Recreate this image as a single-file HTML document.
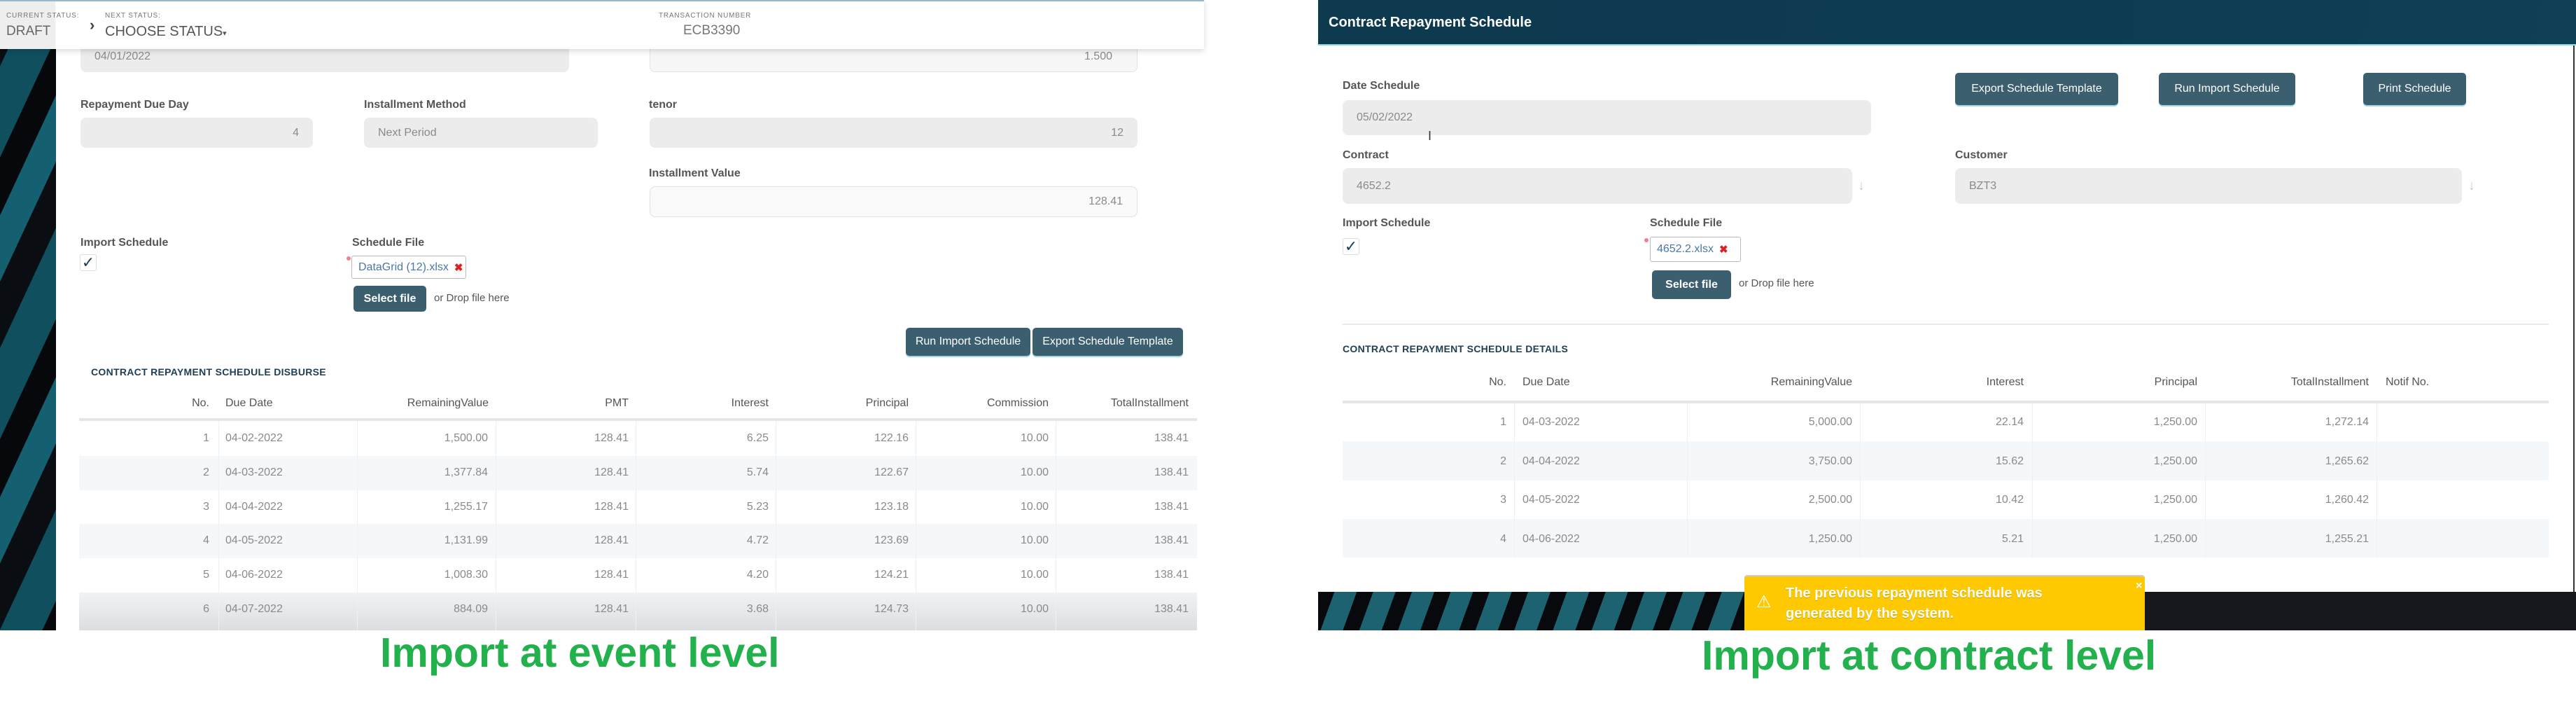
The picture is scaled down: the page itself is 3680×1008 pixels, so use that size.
<!DOCTYPE html>
<html><head><meta charset="utf-8"><style>
*{margin:0;padding:0;box-sizing:border-box}
body{width:3680px;height:1008px;background:#fff;position:relative;overflow:hidden;font-family:"Liberation Sans",sans-serif;}
.a{position:absolute;white-space:nowrap}
.lbl{position:absolute;font-size:16px;font-weight:bold;color:#555;white-space:nowrap;line-height:20px}
.inp{position:absolute;background:#ececec;border-radius:8px;font-size:16px;color:#8a8a8a;line-height:20px;padding:0 20px;display:flex;align-items:center}
.btn{position:absolute;background:#3b5f6e;border-radius:5px;color:#fff;font-size:16px;display:flex;align-items:center;justify-content:center;box-shadow:0 2px 0 #9fd3df;white-space:nowrap}
.row{position:absolute;height:49px}
.c{position:absolute;font-size:16px;color:#8a8a8a;line-height:20px}
.h{position:absolute;font-size:16px;color:#555;line-height:20px}
.vs{position:absolute;width:1px;background:#eef1f3}
.chk{position:absolute;width:24px;height:24px;border:1px solid #ddd;border-radius:3px;background:#fff;color:#1d3f55;font-size:22px;line-height:22px;text-align:center}
.chip{position:absolute;border:1px solid #bbb;border-radius:3px;background:#fff;color:#4a78a6;font-size:16px;display:flex;align-items:center;padding-left:9px;white-space:nowrap}
.chip b{color:#e02020;margin-left:8px;font-size:15px}
.ast{position:absolute;width:6px;height:6px;border-radius:3px;background:#f08090}
.cap{position:absolute;font-weight:bold;color:#22b14c;font-size:59px;line-height:60px;white-space:nowrap}
</style></head><body>

<!-- LEFT PANEL -->
<div class="a" style="left:0;top:0;width:80px;height:900px;background:repeating-linear-gradient(115deg,#0a0d12 0 40px,#0f4f5e 40px 95px,#06080c 95px 130px,#145f70 130px 170px)"></div>
<div class="a" style="left:80px;top:0;width:1640px;height:900px;background:#fff"></div>

<div class="inp" style="left:115px;top:58px;width:698px;height:45px">04/01/2022</div>
<div class="inp" style="left:928px;top:58px;width:697px;height:45px;background:#f7f7f7;border:1px solid #e2e2e2;justify-content:flex-end;padding-right:35px">1.500</div>

<!-- top status bar -->
<div class="a" style="left:0;top:0;width:1720px;height:70px;background:rgba(255,255,255,0.97);box-shadow:0 3px 8px rgba(0,0,0,0.15);border-top:2px solid #9ab8cc"></div>
<div class="a" style="left:0;top:2px;width:79px;height:68px;background:#eeeeee"></div>
<div class="a" style="left:9px;top:17px;font-size:10px;letter-spacing:0.8px;color:#777">CURRENT STATUS:</div>
<div class="a" style="left:9px;top:34px;font-size:19px;color:#666">DRAFT</div>
<div class="a" style="left:128px;top:23px;font-size:22px;font-weight:bold;color:#444">›</div>
<div class="a" style="left:150px;top:17px;font-size:10px;letter-spacing:0.8px;color:#777">NEXT STATUS:</div>
<div class="a" style="left:150px;top:34px;font-size:20px;color:#555">CHOOSE STATUS<span style="font-size:11px">▾</span></div>
<div class="a" style="left:941px;top:17px;font-size:10px;letter-spacing:0.8px;color:#777">TRANSACTION NUMBER</div>
<div class="a" style="left:976px;top:33px;font-size:19px;color:#777">ECB3390</div>

<div class="lbl" style="left:115px;top:140px">Repayment Due Day</div>
<div class="lbl" style="left:520px;top:140px">Installment Method</div>
<div class="lbl" style="left:927px;top:140px">tenor</div>
<div class="inp" style="left:115px;top:168px;width:332px;height:43px;justify-content:flex-end">4</div>
<div class="inp" style="left:520px;top:168px;width:334px;height:43px">Next Period</div>
<div class="inp" style="left:928px;top:168px;width:697px;height:43px;justify-content:flex-end">12</div>
<div class="lbl" style="left:927px;top:238px">Installment Value</div>
<div class="inp" style="left:928px;top:266px;width:697px;height:44px;background:#fafafa;border:1px solid #e2e2e2;justify-content:flex-end">128.41</div>

<div class="lbl" style="left:115px;top:337px">Import Schedule</div>
<div class="chk" style="left:114px;top:363px">✓</div>
<div class="lbl" style="left:503px;top:337px">Schedule File</div>
<div class="ast" style="left:495px;top:366px"></div>
<div class="chip" style="left:502px;top:365px;width:164px;height:33px">DataGrid (12).xlsx<b>✖</b></div>
<div class="btn" style="left:505px;top:408px;width:104px;height:37px;font-weight:bold;box-shadow:none">Select file</div>
<div class="a" style="left:620px;top:417px;font-size:15px;color:#555">or Drop file here</div>

<div class="btn" style="left:1294px;top:468px;width:178px;height:40px">Run Import Schedule</div>
<div class="btn" style="left:1475px;top:468px;width:215px;height:40px">Export Schedule Template</div>

<div class="a" style="left:130px;top:523px;font-size:14px;font-weight:bold;color:#1d3f55;letter-spacing:0.3px">CONTRACT REPAYMENT SCHEDULE DISBURSE</div>

<div class="h" style="right:3381px;top:566px">No.</div>
<div class="h" style="left:322px;top:566px">Due Date</div>
<div class="h" style="right:2982px;top:566px">RemainingValue</div>
<div class="h" style="right:2782px;top:566px">PMT</div>
<div class="h" style="right:2582px;top:566px">Interest</div>
<div class="h" style="right:2382px;top:566px">Principal</div>
<div class="h" style="right:2182px;top:566px">Commission</div>
<div class="h" style="right:1982px;top:566px">TotalInstallment</div>
<div class="a" style="left:113px;top:597px;width:1597px;height:4px;background:#e6e6e6"></div>
<div class="row" style="left:113px;top:651px;width:1597px;background:#f4f8fb"></div>
<div class="row" style="left:113px;top:748px;width:1597px;background:#f4f8fb"></div>
<div class="row" style="left:113px;top:846px;width:1597px;height:54px;background:linear-gradient(#f0f2f4,#dcdee0)"></div>
<div class="vs" style="left:312px;top:601px;height:299px"></div>
<div class="vs" style="left:510px;top:601px;height:299px"></div>
<div class="vs" style="left:708px;top:601px;height:299px"></div>
<div class="vs" style="left:908px;top:601px;height:299px"></div>
<div class="vs" style="left:1108px;top:601px;height:299px"></div>
<div class="vs" style="left:1308px;top:601px;height:299px"></div>
<div class="vs" style="left:1508px;top:601px;height:299px"></div>

<div id="lt"></div>

<div class="cap" style="left:543px;top:902px">Import at event level</div>

<!-- RIGHT PANEL -->
<div class="a" style="left:1883px;top:0;width:1797px;height:65px;background:linear-gradient(100deg,#0e3a50,#0d3b52 60%,#113f55);border-bottom:2px solid #8fd6e4"></div>
<div class="a" style="left:1898px;top:21px;font-size:20px;font-weight:bold;color:#fff">Contract Repayment Schedule</div>
<div class="a" style="left:3676px;top:65px;width:2px;height:780px;background:#333"></div>

<div class="lbl" style="left:1918px;top:113px">Date Schedule</div>
<div class="inp" style="left:1918px;top:143px;width:755px;height:50px">05/02/2022</div>
<div class="a" style="left:2040px;top:184px;font-size:18px;color:#333">I</div>
<div class="btn" style="left:2793px;top:104px;width:233px;height:46px">Export Schedule Template</div>
<div class="btn" style="left:3084px;top:104px;width:195px;height:46px">Run Import Schedule</div>
<div class="btn" style="left:3376px;top:104px;width:147px;height:46px">Print Schedule</div>

<div class="lbl" style="left:1918px;top:212px">Contract</div>
<div class="inp" style="left:1918px;top:240px;width:728px;height:51px">4652.2</div>
<div class="a" style="left:2654px;top:254px;font-size:20px;color:#ccc">↓</div>
<div class="lbl" style="left:2793px;top:212px">Customer</div>
<div class="inp" style="left:2793px;top:240px;width:724px;height:51px">BZT3</div>
<div class="a" style="left:3526px;top:254px;font-size:20px;color:#ccc">↓</div>

<div class="lbl" style="left:1918px;top:309px">Import Schedule</div>
<div class="chk" style="left:1918px;top:340px">✓</div>
<div class="lbl" style="left:2357px;top:309px">Schedule File</div>
<div class="ast" style="left:2349px;top:340px"></div>
<div class="chip" style="left:2357px;top:338px;width:130px;height:36px">4652.2.xlsx<b>✖</b></div>
<div class="btn" style="left:2360px;top:386px;width:113px;height:41px;font-weight:bold;box-shadow:none">Select file</div>
<div class="a" style="left:2484px;top:396px;font-size:15px;color:#555">or Drop file here</div>
<div class="a" style="left:1918px;top:462px;width:1723px;height:2px;background:#eaeaea"></div>

<div class="a" style="left:1918px;top:490px;font-size:14px;font-weight:bold;color:#1d3f55;letter-spacing:0.3px">CONTRACT REPAYMENT SCHEDULE DETAILS</div>

<div class="h" style="right:1528px;top:536px">No.</div>
<div class="h" style="left:2175px;top:536px">Due Date</div>
<div class="h" style="right:1034px;top:536px">RemainingValue</div>
<div class="h" style="right:789px;top:536px">Interest</div>
<div class="h" style="right:541px;top:536px">Principal</div>
<div class="h" style="right:296px;top:536px">TotalInstallment</div>
<div class="h" style="left:3408px;top:536px">Notif No.</div>
<div class="a" style="left:1918px;top:572px;width:1723px;height:4px;background:#e6e6e6"></div>
<div class="row" style="left:1918px;top:630px;width:1723px;height:56px;background:#f4f8fb"></div>
<div class="row" style="left:1918px;top:741px;width:1723px;height:55px;background:#f4f8fb"></div>
<div class="vs" style="left:2163px;top:576px;height:220px"></div>
<div class="vs" style="left:2410px;top:576px;height:220px"></div>
<div class="vs" style="left:2657px;top:576px;height:220px"></div>
<div class="vs" style="left:2903px;top:576px;height:220px"></div>
<div class="vs" style="left:3150px;top:576px;height:220px"></div>
<div class="vs" style="left:3395px;top:576px;height:220px"></div>

<div id="rt"></div>

<div class="a" style="left:1883px;top:845px;width:610px;height:55px;background:repeating-linear-gradient(110deg,#07090c 0 22px,#1c6270 22px 52px)"></div>
<div class="a" style="left:2493px;top:845px;width:1187px;height:55px;background:#17181d"></div>

<div class="a" style="left:2492px;top:821px;width:572px;height:79px;background:#fec901;border-radius:4px 4px 0 0;border-top:2px solid #c9c9e0"></div>
<div class="a" style="left:2509px;top:845px;font-size:24px;color:#fff">⚠</div>
<div class="a" style="left:2551px;top:833px;font-size:20px;line-height:29px;font-weight:bold;color:#fff;text-shadow:0 1px 1px rgba(0,0,0,0.2)">The previous repayment schedule was<br>generated by the system.</div>
<div class="a" style="left:3051px;top:828px;font-size:16px;font-weight:bold;color:#fff">×</div>

<div class="cap" style="left:2431px;top:906px">Import at contract level</div>

<script>
var L=[["1","04-02-2022","1,500.00","128.41","6.25","122.16","10.00","138.41"],
["2","04-03-2022","1,377.84","128.41","5.74","122.67","10.00","138.41"],
["3","04-04-2022","1,255.17","128.41","5.23","123.18","10.00","138.41"],
["4","04-05-2022","1,131.99","128.41","4.72","123.69","10.00","138.41"],
["5","04-06-2022","1,008.30","128.41","4.20","124.21","10.00","138.41"],
["6","04-07-2022","884.09","128.41","3.68","124.73","10.00","138.41"]];
var lr=[299,0,697,898,1098,1298,1498,1698],h="";
L.forEach(function(r,i){var y=616+i*48.8;r.forEach(function(v,j){
 if(j==1)h+='<div class="c" style="left:322px;top:'+y+'px">'+v+'</div>';
 else h+='<div class="c" style="right:'+(3680-lr[j])+'px;top:'+y+'px">'+v+'</div>';});});
document.getElementById("lt").outerHTML=h;
var R=[["1","04-03-2022","5,000.00","22.14","1,250.00","1,272.14"],
["2","04-04-2022","3,750.00","15.62","1,250.00","1,265.62"],
["3","04-05-2022","2,500.00","10.42","1,250.00","1,260.42"],
["4","04-06-2022","1,250.00","5.21","1,250.00","1,255.21"]];
var rr=[2152,0,2646,2891,3139,3384];h="";
R.forEach(function(r,i){var y=593+i*55.5;r.forEach(function(v,j){
 if(j==1)h+='<div class="c" style="left:2175px;top:'+y+'px">'+v+'</div>';
 else h+='<div class="c" style="right:'+(3680-rr[j])+'px;top:'+y+'px">'+v+'</div>';});});
document.getElementById("rt").outerHTML=h;
</script>
</body></html>
